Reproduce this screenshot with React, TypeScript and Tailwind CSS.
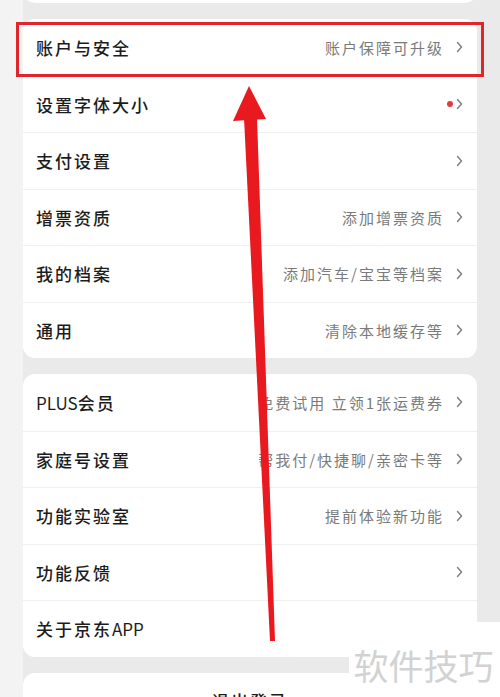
import React from "react";

type Row = { label: React.ReactNode; key: string; value?: string; dot?: boolean };

const Latin = ({ children }: { children: React.ReactNode }) => (
  <span className="tracking-[0px] font-normal">{children}</span>
);

const card1: Row[] = [
  { key: "a", label: "账户与安全", value: "账户保障可升级" },
  { key: "b", label: "设置字体大小", dot: true },
  { key: "c", label: "支付设置" },
  { key: "d", label: "增票资质", value: "添加增票资质" },
  { key: "e", label: "我的档案", value: "添加汽车/宝宝等档案" },
  { key: "f", label: "通用", value: "清除本地缓存等" },
];

const card2: Row[] = [
  { key: "g", label: <><Latin>PLUS</Latin>会员</>, value: "免费试用 立领1张运费券" },
  { key: "h", label: "家庭号设置", value: "帮我付/快捷聊/亲密卡等" },
  { key: "i", label: "功能实验室", value: "提前体验新功能" },
  { key: "j", label: "功能反馈" },
  { key: "k", label: <>关于京东<Latin>APP</Latin></> },
];

function Chevron() {
  return (
    <svg width="7" height="12" viewBox="0 0 7 12" className="shrink-0">
      <path d="M1.5 1.5 L5.5 6 L1.5 10.5" fill="none" stroke="#7d7d7d" strokeWidth="1.4" strokeLinecap="round" strokeLinejoin="round" />
    </svg>
  );
}

function Card({ rows, lastNoChevron }: { rows: Row[]; lastNoChevron?: boolean }) {
  return (
    <div className="bg-white rounded-xl overflow-hidden shrink-0">
      {rows.map((r, i) => {
        const noChev = lastNoChevron && i === rows.length - 1;
        return (
          <div
            key={r.key}
            className={
              "h-[56.5px] flex items-center pl-[13px] pr-[14px] " +
              (i > 0 ? "border-t border-[#efefef]" : "")
            }
          >
            <span className="text-[17px] font-medium text-[#1c1c1c] tracking-[2px] leading-none">{r.label}</span>
            <div className="flex-1" />
            {r.value && (
              <span className="text-[15px] text-[#7a7a7a] tracking-[2px] leading-none mr-[12px] whitespace-nowrap">{r.value}</span>
            )}
            {r.dot && <span className="w-[6px] h-[6px] rounded-full bg-[#e8383d] mr-[3px]" />}
            {!noChev && <Chevron />}
          </div>
        );
      })}
    </div>
  );
}

export default function App() {
  return (
    <div className="relative w-[500px] h-[697px] overflow-hidden bg-[#f3f3f3] font-['Noto_Sans_CJK_SC',sans-serif] flex">
      <div className="w-[23px] shrink-0 bg-[#f3f3f3]" />
      <div className="flex-1 bg-[#eaeaea] pr-[23px] flex flex-col gap-4">
        <div className="h-[40px] -mt-[37px] bg-white rounded-b-xl shrink-0" />
        <Card rows={card1} />
        <Card rows={card2} lastNoChevron />
        <div className="bg-white rounded-xl h-[56px] flex items-center justify-center shrink-0">
          <span className="text-[17px] font-medium text-[#1c1c1c] tracking-[2px]">退出登录</span>
        </div>
      </div>

      {/* highlight rectangle */}
      <div className="absolute left-[16px] top-[22px] w-[468px] h-[55px] border-[3px] border-[#e0262b] pointer-events-none" />

      {/* red arrow */}
      <svg className="absolute left-0 top-0 pointer-events-none" width="500" height="697" viewBox="0 0 500 697">
        <polygon points="249,86 233,121 266,119" fill="#e8191f" />
        <polygon points="244,118 257,118 275,641 270,641" fill="#e8191f" />
      </svg>

      {/* watermark */}
      <div className="absolute left-[349px] top-[622px] w-[151px] h-[75px] bg-white flex items-center justify-center">
        <span className="text-[35px] text-[#d2d2d2] leading-none mt-[10px] -ml-[2px]">软件技巧</span>
      </div>
    </div>
  );
}
